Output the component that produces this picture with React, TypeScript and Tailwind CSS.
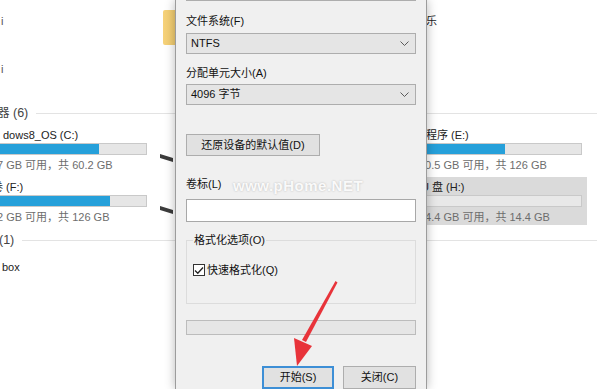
import React from "react";

const font = "font-['Liberation_Sans','Noto_Sans_CJK_SC',sans-serif]";

const Chevron = () => (
  <svg width="9" height="5" viewBox="0 0 9 5">
    <path d="M0.5 0.5 L4.5 4.5 L8.5 0.5" stroke="#5a5a5a" strokeWidth="1" fill="none" />
  </svg>
);

const Combo = ({ value }: { value: string }) => (
  <div className="h-[21px] flex items-center justify-between pl-[4px] pr-[6px] bg-[#e5e5e5] border border-[#adadad] text-[11px] text-[#111]">
    <span>{value}</span>
    <Chevron />
  </div>
);

const Bar = ({ used, className }: { used: string; className: string }) => (
  <div className={`h-[12px] bg-[#e6e6e6] border border-[#c9c9c9] ${className}`}>
    <div className={`h-full bg-[#26a0da] ${used}`} />
  </div>
);

const Header = ({ text, ml, line }: { text: string; ml: string; line: string }) => (
  <div className="h-[14px] flex items-center">
    <span className={`text-[12.5px] text-[#444] whitespace-nowrap ${ml}`}>{text}</span>
    <div className={`flex-1 h-px bg-[#e3e3e3] ${line}`} />
  </div>
);

export default function App() {
  return (
    <div className={`relative w-[597px] h-[389px] overflow-hidden bg-white ${font}`}>
      {/* explorer behind the dialog */}
      <div className="flex flex-col">
        <div className="h-[106px] grid grid-cols-[160px_244px_1fr]">
          <div className="flex flex-col text-[11px] text-[#555]">
            <span className="mt-[13px] h-[14px] ml-[1px]">i</span>
            <span className="mt-[34px] h-[14px] ml-[1px]">i</span>
          </div>
          <div>
            <div className="mt-[10px] ml-[3px] w-[40px] h-[35px] bg-gradient-to-r from-[#f6d27a] to-[#e9c25c] rounded-[2px]" />
          </div>
          <div className="text-[11px] text-[#222]">
            <div className="mt-[13px] h-[14px] ml-[11px]">音乐</div>
          </div>
        </div>

        <Header text="器 (6)" ml="-ml-[3px]" line="ml-[8px]" />

        <div className="pt-[7px] grid grid-cols-[160px_244px_1fr] text-[11px]">
          <div className="flex flex-col gap-[8px] overflow-hidden">
            <div className="h-[44px] flex flex-col">
              <div className="h-[14px] ml-[3px] text-[#222] whitespace-nowrap">dows8_OS (C:)</div>
              <Bar used="w-[99px]" className="mt-[2px] w-[147px] border-l-0" />
              <div className="h-[14px] mt-[2px] -ml-[3px] text-[#6d6d6d] whitespace-nowrap">7 GB 可用，共 60.2 GB</div>
            </div>
            <div className="h-[44px] flex flex-col">
              <div className="h-[14px] -ml-[8px] text-[#222] whitespace-nowrap">卷 (F:)</div>
              <Bar used="w-[110px]" className="mt-[2px] w-[147px] border-l-0" />
              <div className="h-[14px] mt-[2px] -ml-[3px] text-[#6d6d6d] whitespace-nowrap">2 GB 可用，共 126 GB</div>
            </div>
          </div>
          <div className="flex flex-col">
            <svg className="mt-[27px]" width="14" height="10" viewBox="0 0 14 10">
              <polygon points="0,0 13,4 13,8 0,4" fill="#3b3b3b" />
            </svg>
            <svg className="mt-[42px]" width="14" height="10" viewBox="0 0 14 10">
              <polygon points="0,0 13,4 13,8 0,4" fill="#3b3b3b" />
            </svg>
          </div>
          <div className="flex flex-col gap-[8px]">
            <div className="h-[44px] flex flex-col pr-[15px]">
              <div className="h-[14px] text-[#222] whitespace-nowrap">应用程序 (E:)</div>
              <Bar used="w-[100px]" className="mt-[2px] w-full" />
              <div className="h-[14px] mt-[2px] ml-[15px] text-[#6d6d6d] whitespace-nowrap">60.5 GB 可用，共 126 GB</div>
            </div>
            <div className="-my-[2px] py-[2px] mr-[10px] pr-[5px] bg-[#dadada]">
              <div className="h-[44px] flex flex-col">
                <div className="h-[14px] ml-[17px] text-[#222] whitespace-nowrap">U 盘 (H:)</div>
                <Bar used="w-0" className="mt-[2px] w-full bg-[#e8e8e8]" />
                <div className="h-[14px] mt-[2px] ml-[15px] text-[#6d6d6d] whitespace-nowrap">14.4 GB 可用，共 14.4 GB</div>
              </div>
            </div>
          </div>
        </div>

        <div className="mt-[10px]">
          <Header text="(1)" ml="-ml-[1px]" line="ml-[8px]" />
        </div>
        <div className="mt-[12px] h-[14px] ml-[2px] text-[11px] text-[#222]">box</div>
      </div>

      {/* format dialog */}
      <div className="absolute left-[175px] top-0 w-[252px] h-[389px] bg-[#f0f0f0] border-x border-[#9c9c9c] shadow-[0_0_10px_rgba(0,0,0,0.28)] px-[10px] flex flex-col text-[11px] text-[#111]">
        <div className="-mt-[20px] h-[21px] bg-[#e5e5e5] border border-[#adadad]" />
        <div className="mt-[12px] h-[14px]">文件系统(F)</div>
        <div className="mt-[6px]">
          <Combo value="NTFS" />
        </div>
        <div className="mt-[11px] h-[14px]">分配单元大小(A)</div>
        <div className="mt-[5px]">
          <Combo value="4096 字节" />
        </div>
        <button className="mt-[29px] w-[134px] h-[23px] bg-[#e1e1e1] border border-[#adadad] text-[11px]">
          还原设备的默认值(D)
        </button>
        <div className="mt-[20px] h-[14px]">卷标(L)</div>
        <div className="mt-[9px] h-[23px] bg-white border border-[#a8a8a8]" />
        <fieldset className="mt-[11px] h-[72px] border border-[#dcdcdc] pl-[6px]">
          <legend className="h-[14px] ml-0 px-[1px] leading-[14px]">格式化选项(O)</legend>
          <label className="mt-[15px] flex items-center gap-[2px]">
            <span className="w-[12px] h-[12px] bg-white border border-[#333] flex items-center justify-center">
              <svg width="10" height="9" viewBox="0 0 10 9">
                <path d="M1 4.5 L3.8 7.3 L9 1.5" stroke="#222" strokeWidth="1.3" fill="none" />
              </svg>
            </span>
            <span>快速格式化(Q)</span>
          </label>
        </fieldset>
        <div className="mt-[16px] h-[15px] bg-[#e6e6e6] border border-[#bcbcbc]" />
        <div className="mt-[31px] flex justify-end gap-[9px]">
          <button className="w-[72px] h-[23px] bg-[#e1e1e1] border-2 border-[#3d8fd6] text-[11px]">开始(S)</button>
          <button className="w-[73px] h-[23px] bg-[#e1e1e1] border border-[#adadad] text-[11px]">关闭(C)</button>
        </div>

        {/* site watermark */}
        <div className="absolute left-[57px] top-[175px] text-[15px] font-bold text-white/90 tracking-[0.5px] [text-shadow:0_0_2px_rgba(0,0,0,0.25)]">
          www.pHome.NET
        </div>
      </div>

      {/* red arrow */}
      <svg className="absolute left-0 top-0 pointer-events-none" width="597" height="389" viewBox="0 0 597 389">
        <polygon points="335.5,281 337.5,282.5 306,342 302,340" fill="#e8333a" />
        <polygon points="294,338 312,346 297,366" fill="#e8333a" />
      </svg>
    </div>
  );
}
